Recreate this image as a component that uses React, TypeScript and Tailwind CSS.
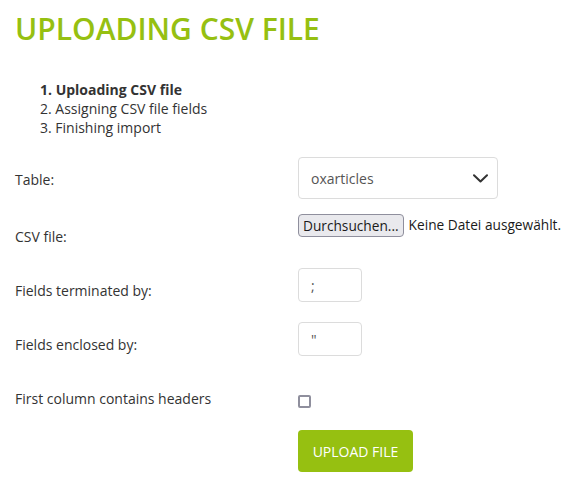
import React from 'react';

const font = { fontFamily: '"Open Sans", "Noto Sans", Arial, sans-serif' };

const steps = [
  { label: '1. Uploading CSV file', active: true },
  { label: '2. Assigning CSV file fields', active: false },
  { label: '3. Finishing import', active: false },
];

function Row({ label, height, labelTop, children }: { label: string; height: string; labelTop: string; children?: React.ReactNode }) {
  return (
    <div className={`flex items-start ${height}`}>
      <div className={`w-[283px] shrink-0 text-[14px] leading-[20px] text-[#333] ${labelTop}`}>{label}</div>
      <div className="flex-1">{children}</div>
    </div>
  );
}

function TextBox({ value }: { value: string }) {
  return (
    <div className="flex h-[34px] w-[64px] items-center rounded-[4px] border border-[#dcdcdc] bg-white pl-[12px] text-[14px] text-[#555]">
      {value}
    </div>
  );
}

export default function App() {
  return (
    <div className="min-h-[479px] w-[570px] bg-white px-[15px]" style={font}>
      <h1 className="pt-[11px] text-[30px] font-semibold leading-[35px] text-[#96c011]">
        UPLOADING CSV FILE
      </h1>

      <ul className="mt-[34px] pl-[25px] text-[14px] leading-[19px] text-[#333]">
        {steps.map(s => (
          <li key={s.label} className={s.active ? 'font-bold' : ''}>
            {s.label}
          </li>
        ))}
      </ul>

      <div className="mt-[20px]">
        <Row label="Table:" height="h-[57px]" labelTop="mt-[13px]">
          <div className="flex h-[42px] w-[200px] items-center justify-between rounded-[4px] border border-[#dcdcdc] bg-white pl-[12px] pr-[9px] text-[14px] text-[#555]">
            <span>oxarticles</span>
            <svg width="15" height="9" viewBox="0 0 15 9" fill="none">
              <path d="M1 1.2 7.5 7.5 14 1.2" stroke="#333" strokeWidth="2" strokeLinecap="round" strokeLinejoin="round" />
            </svg>
          </div>
        </Row>

        <Row label="CSV file:" height="h-[54px]" labelTop="mt-[13px]">
          <div className="flex items-center gap-[5px] whitespace-nowrap text-[13.7px] text-[#1a1a1a]">
            <span className="flex h-[23px] items-center rounded-[4px] border border-[#8f8f9d] bg-[#e9e9ed] px-[4px] leading-none">
              Durchsuchen...
            </span>
            <span>Keine Datei ausgewählt.</span>
          </div>
        </Row>

        <Row label="Fields terminated by:" height="h-[54px]" labelTop="mt-[13px]">
          <TextBox value=";" />
        </Row>

        <Row label="Fields enclosed by:" height="h-[66px]" labelTop="mt-[13px]">
          <TextBox value={'"'} />
        </Row>

        <Row label="First column contains headers" height="h-[42px]" labelTop="mt-[1px]">
          <div className="mt-[7px] h-[13px] w-[13px] rounded-[2px] border-2 border-[#8f8f9d] bg-white" />
        </Row>

        <div className="flex">
          <div className="w-[283px] shrink-0" />
          <button className="h-[42px] w-[115px] rounded-[4px] bg-[#96c011] text-[14px] uppercase text-white">
            Upload file
          </button>
        </div>
      </div>
    </div>
  );
}
